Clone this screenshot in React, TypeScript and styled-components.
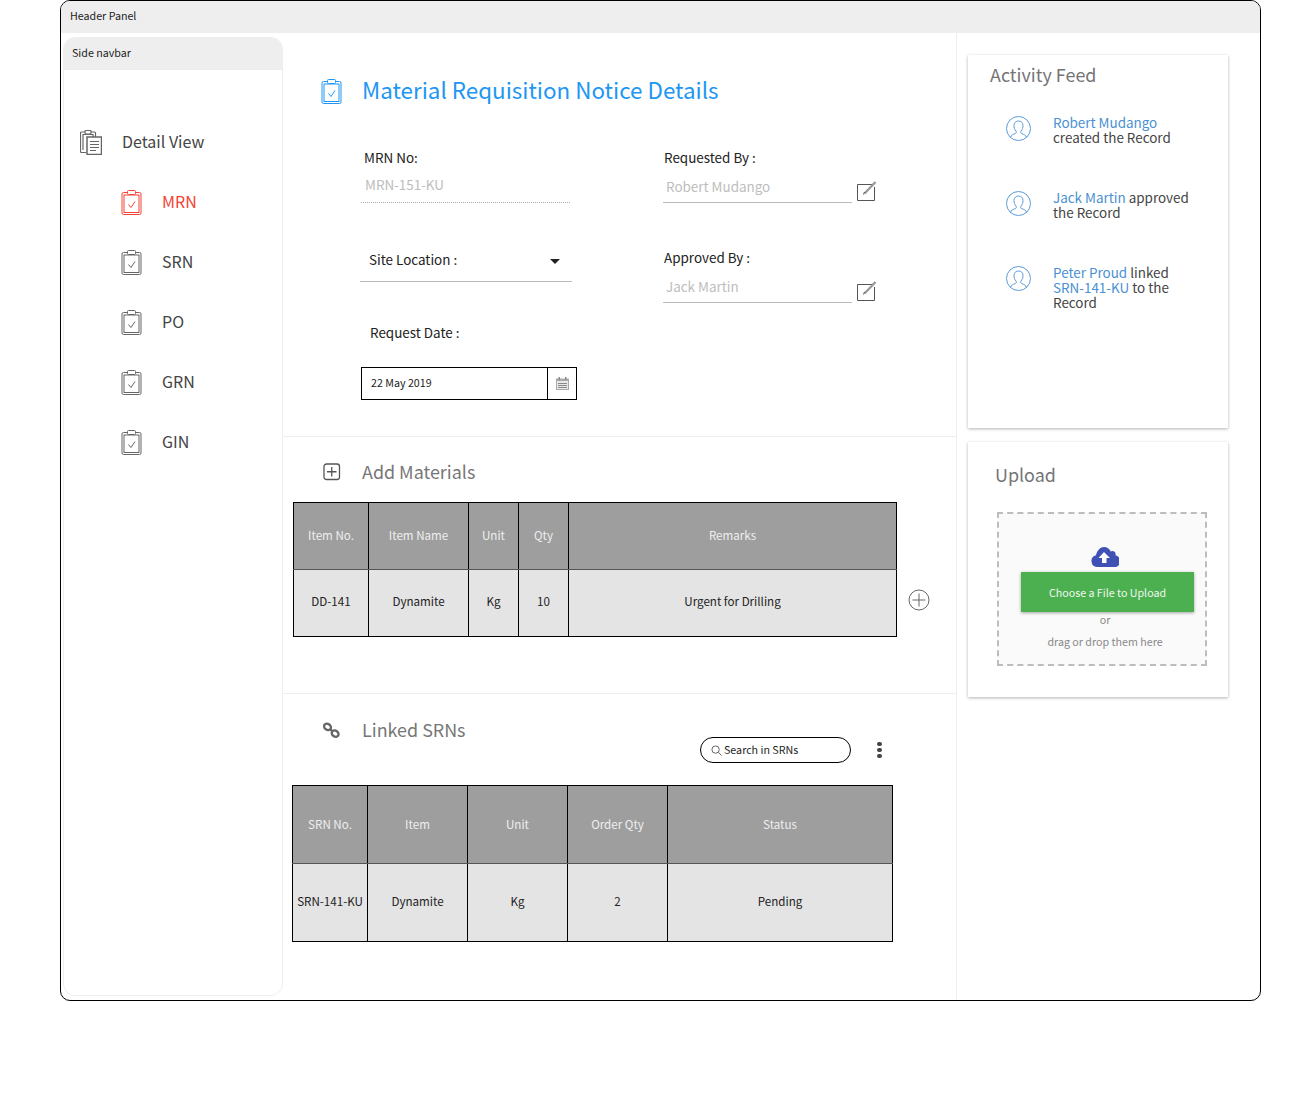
import { createGlobalStyle } from 'styled-components';
import styled from 'styled-components';

const GlobalStyle = createGlobalStyle`
  html, body {
    margin: 0;
    padding: 0;
    background: #fff;
  }
  body {
    font-family: "Noto Sans CJK JP", "Noto Sans", sans-serif;
    color: #333;
  }
  * {
    box-sizing: border-box;
  }
`;

const Frame = styled.div`
  width: 1201px;
  height: 1001px;
  margin-left: 60px;
  border: 1px solid #000;
  border-radius: 10px;
  overflow: hidden;
  display: flex;
  flex-direction: column;
`;

const HeaderPanel = styled.div`
  height: 32px;
  flex: none;
  background: #eee;
  padding-left: 9px;
  font-size: 10.7px;
  line-height: 30px;
  color: #222;
`;

const Body = styled.div`
  flex: 1;
  display: flex;
  min-height: 0;
`;

const Sidebar = styled.nav`
  width: 220px;
  flex: none;
  margin: 4px 0 4px 2px;
  border: 1px solid #eee;
  border-radius: 12px;
  overflow: hidden;
`;

const SideHead = styled.div`
  height: 33px;
  margin: -1px -1px 42px;
  background: #eee;
  padding-left: 9px;
  font-size: 10.7px;
  line-height: 32px;
  color: #222;
`;

const NavRow = styled.div<{ $sub?: boolean; $active?: boolean }>`
  height: 60px;
  display: flex;
  align-items: center;
  gap: 20px;
  padding-left: ${(p) => (p.$sub ? '57px' : '16px')};
  padding-bottom: 2px;
  font-size: 16px;
  color: ${(p) => (p.$active ? '#f44336' : '#444')};

  svg {
    color: ${(p) => (p.$active ? '#f44336' : '#666')};
    flex: none;
    margin-top: 2px;
  }
`;

const Main = styled.main`
  width: 674px;
  flex: none;
  border-right: 1px solid #eee;
`;

const Section = styled.section<{ $height: number; $last?: boolean }>`
  display: flow-root;
  height: ${(p) => p.$height}px;
  border-bottom: ${(p) => (p.$last ? 'none' : '1px solid #eee')};
`;

const PageTitle = styled.div`
  height: 36px;
  margin: 40px 0 39px;
  padding: 0 0 4px 38px;
  display: flex;
  align-items: center;
  gap: 20px;
  font-size: 22.4px;
  line-height: 32px;
  color: #2196f3;

  svg {
    flex: none;
    margin-top: 4px;
  }
`;

const FormGrid = styled.div`
  display: grid;
  grid-template-columns: 303px 240px;
  padding-left: 77px;
`;

const FormColumn = styled.div`
  display: flex;
  flex-direction: column;
`;

const Label = styled.div<{ $left: number }>`
  height: 20px;
  padding-left: ${(p) => p.$left}px;
  font-size: 13.44px;
  line-height: 18px;
  color: #222;
`;

const DottedValue = styled.div`
  width: 209px;
  margin: 7px 0 0 1px;
  padding: 0 0 9px 4px;
  border-bottom: 1px dotted #aaa;
  font-size: 13.44px;
  line-height: 18px;
  color: #bdbdbd;
`;

const SelectBox = styled.div`
  width: 212px;
  height: 42px;
  margin-top: 37px;
  padding: 9px 12px 0 9px;
  display: flex;
  justify-content: space-between;
  border-bottom: 1px solid #bbb;
  font-size: 13.44px;
  line-height: 20px;
  color: #222;
`;

const Caret = styled.span`
  width: 0;
  height: 0;
  margin-top: 10px;
  border-left: 5px solid transparent;
  border-right: 5px solid transparent;
  border-top: 5px solid #222;
`;

const RequestDate = styled(Label)`
  margin-top: 41px;
`;

const DateBox = styled.div`
  width: 216px;
  height: 33px;
  margin: 24px 0 0 1px;
  border: 1px solid #000;
  display: flex;
  align-items: center;
  justify-content: space-between;
  padding-left: 9px;
  font-size: 10.7px;
  color: #222;
`;

const DateText = styled.span`
  margin-bottom: 2px;
`;

const DateButton = styled.span`
  width: 29px;
  height: 100%;
  border-left: 1px solid #000;
  display: flex;
  align-items: center;
  justify-content: center;
`;

const PersonField = styled.div<{ $first?: boolean }>`
  margin-top: ${(p) => (p.$first ? '0' : '45px')};
`;

const PersonRow = styled.div`
  display: flex;
  align-items: flex-end;
  gap: 5px;

  svg {
    margin-bottom: 2px;
  }
`;

const PersonValue = styled.div`
  width: 189px;
  margin-top: 9px;
  padding: 0 0 7px 3px;
  border-bottom: 1px solid #bbb;
  font-size: 13.44px;
  line-height: 18px;
  color: #bdbdbd;
`;

const SectionHead = styled.div<{ $height: number; $top: number; $right?: number }>`
  height: ${(p) => p.$height}px;
  margin-top: ${(p) => p.$top}px;
  padding: 0 ${(p) => p.$right ?? 0}px 0 40px;
  display: flex;
  align-items: flex-start;
`;

const SectionTitle = styled.h2`
  margin: 0 0 0 21px;
  font-size: 17.92px;
  font-weight: 400;
  line-height: 18px;
  color: #777;
`;

const IconSlot = styled.span`
  width: 18px;
  height: 20px;
  flex: none;
  display: flex;
  align-items: center;
  justify-content: center;
`;

const TableRow = styled.div<{ $left: number }>`
  display: flex;
  align-items: flex-end;
  padding-left: ${(p) => p.$left}px;
`;

const DataTable = styled.table<{ $width: number; $rowHeight: number }>`
  width: ${(p) => p.$width}px;
  table-layout: fixed;
  border-collapse: collapse;
  font-size: 11.6px;

  th, td {
    height: ${(p) => p.$rowHeight}px;
    border: 1px solid #000;
    text-align: center;
    font-weight: 400;
  }
  th {
    padding: 0 0 2px;
    background: #9e9e9e;
    color: #eee;
    border-bottom-color: #555;
  }
  td {
    padding: 0 0 4px;
    background: #e4e4e4;
    color: #222;
  }
`;

const AddRowButton = styled.span`
  margin: 0 0 26px 11px;
  height: 22px;
`;

const Toolbar = styled.div`
  margin: 17px 0 0 auto;
  display: flex;
  align-items: flex-start;
  gap: 26px;
`;

const SearchBox = styled.div`
  width: 151px;
  height: 26px;
  border: 1px solid #000;
  border-radius: 13px;
  padding: 0 0 2px 10px;
  display: flex;
  align-items: center;
  gap: 2px;
  font-size: 10.7px;
  color: #222;

  svg {
    margin-top: 2px;
  }
`;

const Dots = styled.span`
  margin-top: 5px;
  display: flex;
  flex-direction: column;
  gap: 2px;

  i {
    width: 5px;
    height: 4px;
    border-radius: 2px;
    background: #444;
  }
`;

const RightColumn = styled.aside`
  width: 260px;
  margin-left: 11px;
  flex: none;
`;

const Card = styled.div<{ $height: number; $top: number }>`
  height: ${(p) => p.$height}px;
  margin-top: ${(p) => p.$top}px;
  background: #fff;
  box-shadow: 0 1px 3px rgba(0, 0, 0, 0.3);
`;

const CardTitle = styled.h3<{ $top: number; $left: number }>`
  margin: 0;
  padding: ${(p) => p.$top}px 0 0 ${(p) => p.$left}px;
  font-size: 17.92px;
  font-weight: 400;
  line-height: 18px;
  color: #757575;
`;

const FeedList = styled.div`
  margin-top: 32px;
  padding-left: 38px;
`;

const FeedItem = styled.div`
  height: 75px;
  display: flex;
  gap: 22px;

  svg {
    flex: none;
    margin-top: 1px;
  }
`;

const FeedText = styled.div`
  width: 140px;
  font-size: 13.44px;
  line-height: 15px;
  color: #444;

  a {
    color: #4a90d2;
    text-decoration: none;
  }
`;

const DropZone = styled.div`
  width: 210px;
  height: 154px;
  margin: 29px 0 0 29px;
  padding: 33px 0 0 6px;
  border: 2px dashed #bdbdbd;
  background: #fafafa;
  display: flex;
  flex-direction: column;
  align-items: center;
`;

const UploadButton = styled.div`
  width: 173px;
  height: 40px;
  margin: 5px 0 0 5px;
  flex: none;
  background: #4caf50;
  box-shadow: 0 1px 3px rgba(0, 0, 0, 0.35);
  color: #f1f8f1;
  font-size: 10.7px;
  line-height: 42px;
  text-align: center;
`;

const DropHint = styled.div<{ $top: number }>`
  margin-top: ${(p) => p.$top}px;
  font-size: 10.7px;
  line-height: 16px;
  color: #888;
`;

function ClipboardIcon({ size = 21 }: { size?: number }) {
  return (
    <svg width={size} height={(size * 25) / 21} viewBox="0 0 21 25" fill="none" stroke="currentColor" strokeWidth="1">
      <rect x="1" y="2.5" width="19" height="22" rx="1.5" />
      <rect x="3" y="5" width="15" height="17.5" />
      <rect x="6.5" y="0.5" width="8" height="4" rx="1" fill="#fff" />
      <path d="M7.5 14.5l2.5 3 4-6" />
    </svg>
  );
}

function DetailIcon() {
  return (
    <svg width="22" height="25" viewBox="0 0 22 25" fill="none" stroke="#666" strokeWidth="1.2">
      <path d="M6 22.5H1.5a1 1 0 0 1-1-1V3a1 1 0 0 1 1-1h13a1 1 0 0 1 1 1v4" />
      <path d="M3 20V4.5h10V7" />
      <rect x="5" y="0.5" width="6" height="3.5" rx="1" fill="#fff" />
      <rect x="7" y="7" width="14.5" height="17.5" strokeWidth="1.5" />
      <path d="M10 11.5h9M10 14.5h9M10 17.5h9M10 20.5h6" strokeWidth="1" />
    </svg>
  );
}

function EditIcon() {
  return (
    <svg width="20" height="20" viewBox="0 0 20 20" fill="none" stroke="#555">
      <path d="M15 3.500H0.500v16h17V6" strokeWidth="1" />
      <path d="M7.500 12.500L18.500 1" strokeWidth="2.400" stroke="#999" />
      <path d="M6.500 13.500l1-2.500" strokeWidth="1" />
    </svg>
  );
}

function CalendarIcon() {
  return (
    <svg width="13" height="13" viewBox="0 0 13 13" fill="#8a8a8a">
      <path d="M0 1.500h13V13H0z" fill="#aaa" />
      <path d="M1 4h11v8H1z" fill="#e8e8e8" />
      <path d="M2 6h9v1H2zM2 8h9v1H2zM2 10h9v1H2z" />
      <path d="M2.500 0h1.500v3H2.500zM9 0h1.500v3H9z" />
    </svg>
  );
}

function PlusSquareIcon() {
  return (
    <svg width="18" height="18" viewBox="0 0 18 18" fill="none" stroke="#555" strokeWidth="1.3">
      <rect x="1" y="1" width="15.500" height="15.500" rx="2.500" />
      <path d="M8.750 4v9.500M4 8.750h9.500" />
    </svg>
  );
}

function PlusCircleIcon() {
  return (
    <svg width="22" height="22" viewBox="0 0 22 22" fill="none" stroke="#666" strokeWidth="1">
      <circle cx="11" cy="11" r="10" />
      <path d="M11 4.500v13M4.500 11h13" />
    </svg>
  );
}

function ChainIcon() {
  return (
    <svg width="20" height="20" viewBox="0 0 20 20" fill="none" stroke="#666" strokeWidth="2.600">
      <ellipse cx="5" cy="6.500" rx="4" ry="3.300" transform="rotate(35 5 6.500)" />
      <ellipse cx="13.500" cy="14" rx="4" ry="3.300" transform="rotate(35 13.500 14)" />
      <path d="M8 9l2.500 2.500" />
    </svg>
  );
}

function SearchIcon() {
  return (
    <svg width="11" height="11" viewBox="0 0 12 12" fill="none" stroke="#555" strokeWidth="1">
      <circle cx="5" cy="5" r="4" />
      <path d="M8 8l3.500 3.500" />
    </svg>
  );
}

function UserIcon() {
  return (
    <svg width="25" height="25" viewBox="0 0 25 25" fill="none" stroke="#5b9bd5" strokeWidth="1">
      <circle cx="12.500" cy="12.500" r="12" />
      <path d="M4.500 21.500c.5-2.500 2.500-3 5-4 1-.5 1-1.500.5-2.500-1.500-1.500-2-3.500-2-5.500 0-3 2-4.500 4.500-4.500s4.500 1.500 4.500 4.500c0 2-.5 4-2 5.500-.5 1-.5 2 .5 2.500 2.500 1 4.500 1.500 5 4" />
    </svg>
  );
}

function CloudIcon() {
  return (
    <svg width="28" height="20" viewBox="0 0 28 20">
      <path
        d="M6 20a6 6 0 0 1-1-11.800C6 3.500 9.500 0 13 0c3 0 5.500 1.800 6.800 4.500 1-.8 3-.8 4 .5.800 1 1 2 .7 3.200A6 6 0 0 1 22 20z"
        fill="#3f51b5"
      />
      <path d="M13 5l-5.500 6H11v5h4.500v-5H19z" fill="#fff" />
    </svg>
  );
}

const navItems = ['SRN', 'PO', 'GRN', 'GIN'];

function App() {
  return (
    <>
      <GlobalStyle />
      <Frame>
        <HeaderPanel>Header Panel</HeaderPanel>
        <Body>
          <Sidebar>
            <SideHead>Side navbar</SideHead>
            <NavRow>
              <DetailIcon />
              Detail View
            </NavRow>
            <NavRow $sub $active>
              <ClipboardIcon />
              MRN
            </NavRow>
            {navItems.map((item) => (
              <NavRow $sub key={item}>
                <ClipboardIcon />
                {item}
              </NavRow>
            ))}
          </Sidebar>

          <Main>
            <Section $height={404}>
              <PageTitle>
                <ClipboardIcon />
                Material Requisition Notice Details
              </PageTitle>
              <FormGrid>
                <FormColumn>
                  <Label $left={4}>MRN No:</Label>
                  <DottedValue>MRN-151-KU</DottedValue>
                  <SelectBox>
                    Site Location :
                    <Caret />
                  </SelectBox>
                  <RequestDate $left={10}>Request Date :</RequestDate>
                  <DateBox>
                    <DateText>22 May 2019</DateText>
                    <DateButton>
                      <CalendarIcon />
                    </DateButton>
                  </DateBox>
                </FormColumn>
                <FormColumn>
                  <PersonField $first>
                    <Label $left={1}>Requested By :</Label>
                    <PersonRow>
                      <PersonValue>Robert Mudango</PersonValue>
                      <EditIcon />
                    </PersonRow>
                  </PersonField>
                  <PersonField>
                    <Label $left={1}>Approved By :</Label>
                    <PersonRow>
                      <PersonValue>Jack Martin</PersonValue>
                      <EditIcon />
                    </PersonRow>
                  </PersonField>
                </FormColumn>
              </FormGrid>
            </Section>

            <Section $height={257}>
              <SectionHead $height={40} $top={25}>
                <IconSlot>
                  <PlusSquareIcon />
                </IconSlot>
                <SectionTitle>Add Materials</SectionTitle>
              </SectionHead>
              <TableRow $left={10}>
                <DataTable $width={603} $rowHeight={67}>
                  <colgroup>
                    <col width="75" />
                    <col width="100" />
                    <col width="50" />
                    <col width="50" />
                    <col width="328" />
                  </colgroup>
                  <thead>
                    <tr>
                      <th>Item No.</th>
                      <th>Item Name</th>
                      <th>Unit</th>
                      <th>Qty</th>
                      <th>Remarks</th>
                    </tr>
                  </thead>
                  <tbody>
                    <tr>
                      <td>DD-141</td>
                      <td>Dynamite</td>
                      <td>Kg</td>
                      <td>10</td>
                      <td>Urgent for Drilling</td>
                    </tr>
                  </tbody>
                </DataTable>
                <AddRowButton>
                  <PlusCircleIcon />
                </AddRowButton>
              </TableRow>
            </Section>

            <Section $height={306} $last>
              <SectionHead $height={65} $top={26} $right={74}>
                <IconSlot>
                  <ChainIcon />
                </IconSlot>
                <SectionTitle>Linked SRNs</SectionTitle>
                <Toolbar>
                  <SearchBox>
                    <SearchIcon />
                    Search in SRNs
                  </SearchBox>
                  <Dots>
                    <i />
                    <i />
                    <i />
                  </Dots>
                </Toolbar>
              </SectionHead>
              <TableRow $left={9}>
                <DataTable $width={600} $rowHeight={78}>
                  <colgroup>
                    <col width="75" />
                    <col width="100" />
                    <col width="100" />
                    <col width="100" />
                    <col width="225" />
                  </colgroup>
                  <thead>
                    <tr>
                      <th>SRN No.</th>
                      <th>Item</th>
                      <th>Unit</th>
                      <th>Order Qty</th>
                      <th>Status</th>
                    </tr>
                  </thead>
                  <tbody>
                    <tr>
                      <td>SRN-141-KU</td>
                      <td>Dynamite</td>
                      <td>Kg</td>
                      <td>2</td>
                      <td>Pending</td>
                    </tr>
                  </tbody>
                </DataTable>
              </TableRow>
            </Section>
          </Main>

          <RightColumn>
            <Card $height={373} $top={22}>
              <CardTitle $top={10} $left={22}>Activity Feed</CardTitle>
              <FeedList>
                <FeedItem>
                  <UserIcon />
                  <FeedText>
                    <a>Robert Mudango</a> created the Record
                  </FeedText>
                </FeedItem>
                <FeedItem>
                  <UserIcon />
                  <FeedText>
                    <a>Jack Martin</a> approved the Record
                  </FeedText>
                </FeedItem>
                <FeedItem>
                  <UserIcon />
                  <FeedText>
                    <a>Peter Proud</a> linked <a>SRN-141-KU</a> to the Record
                  </FeedText>
                </FeedItem>
              </FeedList>
            </Card>
            <Card $height={255} $top={14}>
              <CardTitle $top={23} $left={27}>Upload</CardTitle>
              <DropZone>
                <CloudIcon />
                <UploadButton>Choose a File to Upload</UploadButton>
                <DropHint $top={0}>or</DropHint>
                <DropHint $top={6}>drag or drop them here</DropHint>
              </DropZone>
            </Card>
          </RightColumn>
        </Body>
      </Frame>
    </>
  );
}

export default App;
